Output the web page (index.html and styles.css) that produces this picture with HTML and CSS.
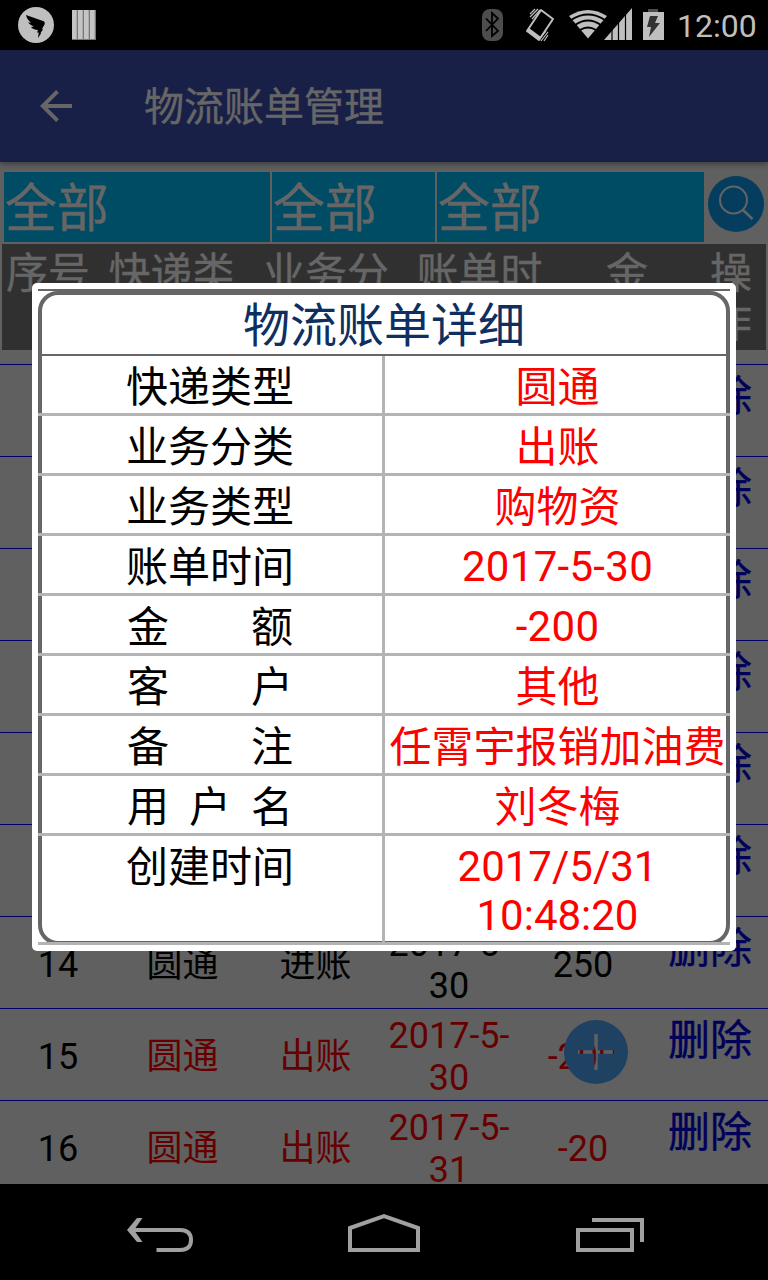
FILE: index.html
```
<!DOCTYPE html>
<html lang="zh-CN">
<head>
<meta charset="utf-8">
<title>物流账单管理</title>
<link rel="stylesheet" href="styles.css">
</head>
<body>
<div class="screen">
  <div class="statusbar">
    <svg class="status-left" width="110" height="50" viewBox="0 0 110 50">
      <circle cx="36" cy="25" r="18" fill="#bfbfbf"/>
      <path d="M26 15L43 21Q45.500 22 44.500 24.500L42 29L43 29.500L40.500 33L41 33.500L38 38L38.700 32.500H37L38 30Q33 29.500 31 27L34 26.500Q30 25 28 22.500L31 22.500Q27 20 26 15Z" fill="#000"/>
      <path d="M72 10h24v30H72z" fill="#777"/>
      <path d="M72 10h4.700v29h-4.700zM78 10h4.700v29h-4.700zM84 10h4.700v29h-4.700zM90 10h4.700v29h-4.700z" fill="#c4c4c4"/>
    </svg>
    <svg class="status-right" width="198" height="50" viewBox="476 0 198 50">
      <rect x="482" y="9" width="21" height="32" rx="8" fill="#4d4d4d"/>
      <path d="M486 18.500L498 31L492 36V13L498 18.500L486 31" fill="none" stroke="#000" stroke-width="1.800"/>
      <path d="M541 10L553 19L539 40L527 31Z" fill="none" stroke="#bfbfbf" stroke-width="2" stroke-linejoin="round"/>
      <path d="M527 31L529 28L541 37L539 40Z" fill="#bfbfbf"/>
      <path d="M530 17L538 9M532 19L540 10M530 14L535 9M541 41L548 32M544 41L548 35M539 39L546 31" stroke="#bfbfbf" stroke-width="1.200"/>
      <path d="M569 16Q588 4 607 16L588 38.500Z" fill="#bfbfbf"/>
      <path d="M571 20Q588 9 605 20M575 25Q588 16 601 25M580 30Q588 25 596 30" fill="none" stroke="#000" stroke-width="1.900"/>
      <path d="M604 40L632 8V40Z" fill="#bfbfbf"/>
      <path d="M612 8V40M618.500 8V40M625.500 8V40" stroke="#000" stroke-width="1.200"/>
      <path d="M643 12h5V9h10v3h6v28h-21z" fill="#bfbfbf"/>
      <path d="M648 9h10v3h-10z" fill="#4d4d4d"/>
      <path d="M650 16h8l-3 7h5L649 37L651 27H647Z" fill="#333"/>
    </svg>
    <span class="clock">12:00</span>
  </div>

  <div class="appbar">
    <svg class="back" width="32" height="32" viewBox="0 0 32 32"><path d="M32 16H3M17.500 1.400L2.800 16L17.500 30.600" fill="none" stroke="#666" stroke-width="4"/></svg>
    <h1>物流账单管理</h1>
  </div>

  <div class="content">
    <div class="filters">
      <div class="filter">全部</div>
      <div class="filter">全部</div>
      <div class="filter">全部</div>
      <svg class="search" width="56" height="56" viewBox="0 0 56 56">
        <circle cx="28" cy="28" r="28" fill="#053d5e"/>
        <circle cx="25.500" cy="24" r="13.500" fill="none" stroke="#606568" stroke-width="2"/>
        <path d="M35 34L44.500 43" stroke="#606568" stroke-width="2.500"/>
      </svg>
    </div>

    <div class="thead">
      <span>序号</span><span>快递类</span><span>业务分</span><span>账单时</span><span>金</span><span class="act">操<br>作</span>
    </div>

    <div class="rows">
      <div class="row"><a>删除</a></div>
      <div class="row"><a>删除</a></div>
      <div class="row"><a>删除</a></div>
      <div class="row"><a>删除</a></div>
      <div class="row"><a>删除</a></div>
      <div class="row"><a>删除</a></div>
      <div class="row"><span>14</span><span>圆通</span><span>进账</span><span>2017-5-<br>30</span><span>250</span><a>删除</a></div>
      <div class="row out"><span class="no">15</span><span>圆通</span><span>出账</span><span>2017-5-<br>30</span><span>-200</span><a>删除</a></div>
      <div class="row out"><span class="no">16</span><span>圆通</span><span>出账</span><span>2017-5-<br>31</span><span>-20</span><a>删除</a></div>
    </div>
  </div>

  <div class="navbar">
    <svg width="768" height="96" viewBox="0 0 768 96" fill="none" stroke="#a0a0a0" stroke-width="4">
      <path d="M131 46H180Q191 46 191 56T180 66H156.500"/>
      <path d="M137 34H142.500L134 46L142.500 58H137L127 46Z" fill="#a0a0a0" stroke="none"/>
      <path d="M350 66V44L384 32L418 44V66Z"/>
      <path d="M578 46H632V66H578ZM592 36H642V58"/>
    </svg>
  </div>

  <svg class="fab" width="64" height="64" viewBox="0 0 64 64">
    <path fill="#204262" fill-rule="evenodd" d="M32 0A32 32 0 1 1 32 64A32 32 0 1 1 32 0ZM30.300 14V30.300H14V33.700H30.300V50H33.700V33.700H50V30.300H33.700V14Z"/>
  </svg>

  <div class="dialog">
    <div class="topline"></div>
    <div class="frame">
      <h2>物流账单详细</h2>
      <div class="item"><b>快递类型</b><i>圆通</i></div>
      <div class="item"><b>业务分类</b><i>出账</i></div>
      <div class="item"><b>业务类型</b><i>购物资</i></div>
      <div class="item"><b>账单时间</b><i class="num">2017-5-30</i></div>
      <div class="item"><b class="spread"><u>金</u><u>额</u></b><i class="num">-200</i></div>
      <div class="item"><b class="spread"><u>客</u><u>户</u></b><i>其他</i></div>
      <div class="item"><b class="spread"><u>备</u><u>注</u></b><i>任霄宇报销加油费</i></div>
      <div class="item"><b class="spread"><u>用</u><u>户</u><u>名</u></b><i>刘冬梅</i></div>
      <div class="item last"><b>创建时间</b><i class="num">2017/5/31<br>10:48:20</i></div>
    </div>
  </div>
</div>
</body>
</html>
```
FILE: styles.css
```
* { box-sizing: border-box; }
body { margin: 0; background: #000; font-family: Roboto, "Noto Sans CJK SC", sans-serif; }
h1, h2 { margin: 0; font-weight: 400; }
b, i, u { font-weight: 400; font-style: normal; text-decoration: none; }
h1, .filter, .thead, .row a { -webkit-text-stroke: .4px currentColor; }

.screen { position: relative; width: 768px; height: 1280px; overflow: hidden; display: flex; flex-direction: column; }

.statusbar { height: 50px; flex: none; display: flex; align-items: center; background: #000; }
.status-left { margin-right: 366px; flex: none; }
.status-right { flex: none; }
.clock { margin-left: 3px; font-size: 32px; line-height: 50px; color: #bfbfbf; white-space: nowrap; padding-top: 2px; }

.appbar { height: 112px; flex: none; display: flex; align-items: center; padding-left: 40px; background: #192048; box-shadow: 0 2px 6px rgba(0,0,0,.4); z-index: 1; }
.appbar h1 { margin-left: 72px; padding-top: 4px; font-size: 40px; line-height: 60px; color: #666; }

.content { height: 1022px; flex: none; overflow: hidden; background: #606060; padding-top: 10px; }
.filters { display: flex; gap: 2px; height: 70px; padding-left: 4px; }
.filter { height: 70px; padding-left: 1px; background: #004c65; color: #666; font-size: 52px; line-height: 76px; }
.filter:nth-child(1) { width: 266px; }
.filter:nth-child(2) { width: 163px; }
.filter:nth-child(3) { width: 267px; }
.search { margin: 4px 0 0 2px; }

.thead { display: grid; grid-template-columns: 92px 155px 154px 153px 142px 68px; height: 106px; margin: 2px 2px 0; padding-top: 5px; background: #303030; color: #666; font-size: 42px; line-height: 49px; text-align: center; }
.thead .act { text-align: right; padding-right: 14px; }

.rows { margin-top: 14px; }
.row { display: grid; grid-template-columns: 116px 133px 133px 134px 134px 118px; align-items: center; height: 92px; padding-top: 4px; border-top: 1px solid #000066; color: #000; font-size: 36px; line-height: 42px; text-align: center; }
.row a { grid-column: 6; grid-row: 1; align-self: start; padding-top: 3px; text-align: left; padding-left: 18px; font-size: 42px; line-height: 50px; color: #000059; white-space: nowrap; }
.out { color: #660000; }
.out .no { color: #000; }

.navbar { height: 96px; flex: none; background: #000; }
.fab { position: absolute; left: 564px; top: 1020px; }

.dialog { position: absolute; left: 32px; top: 283px; width: 704px; height: 668px; padding: 6px; border-radius: 5px; background: #fff; z-index: 2; }
.topline { height: 2px; background: #666; }
.frame { height: 654px; border: 4px solid #666; border-radius: 20px; }
.frame h2 { height: 61px; border-bottom: 2px solid #666; color: #0e2f62; font-size: 47px; line-height: 62px; text-align: center; }
.item { display: flex; height: 60px; margin: 0 -4px; border-bottom: 3px solid #b3b3b3; font-size: 42px; line-height: 64px; text-align: center; }
.item b { width: 347px; border-right: 3px solid #b3b3b3; color: #000; }
.item i { flex: 1; color: #f00; white-space: nowrap; }
.item .num { line-height: 62px; letter-spacing: .3px; }
.item .spread { display: flex; justify-content: space-between; padding: 0 89px; }
.last { height: 109px; }
.item.last .num { padding-top: 6px; line-height: 49px; letter-spacing: 0; }
```
